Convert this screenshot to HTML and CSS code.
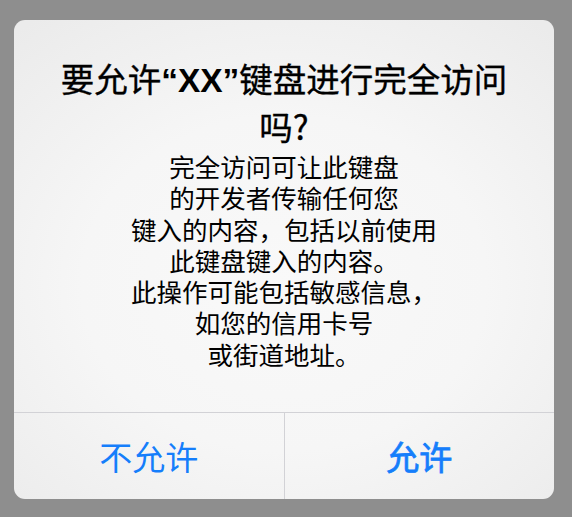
FILE: index.html
```html
<!DOCTYPE html>
<html lang="zh-CN">
<head>
<meta charset="utf-8">
<title>键盘完全访问</title>
<link rel="stylesheet" href="styles.css">
</head>
<body>
<div class="screen">
  <div class="alert">
    <div class="alert-content">
      <h1 class="alert-title">要允许<span class="latin">“XX”</span>键盘进行完全访问<br>吗?</h1>
      <p class="alert-message">完全访问可让此键盘<br>的开发者传输任何您<br>键入的内容，包括以前使用<br>此键盘键入的内容。<br>此操作可能包括敏感信息，<br>如您的信用卡号<br>或街道地址。</p>
    </div>
    <div class="alert-actions">
      <button class="alert-btn">不允许</button>
      <button class="alert-btn alert-btn-primary">允许</button>
    </div>
  </div>
</div>
</body>
</html>
```
FILE: styles.css
```css
* { box-sizing: border-box; }
html, body {
  margin: 0;
  padding: 0;
  background: #8e8e8e;
}
body {
  font-family: "Noto Sans CJK SC", "Noto Sans", sans-serif;
  color: #000;
}
.screen {
  width: 572px;
  height: 517px;
  padding: 20px 18px 18px 14px;
  display: flex;
}
.alert {
  flex: 1;
  display: flex;
  flex-direction: column;
  border-radius: 11px;
  overflow: hidden;
  background: radial-gradient(ellipse 75% 70% at 50% 55%, #f9f9f9 0%, #f6f6f6 50%, #ebebeb 100%);
}
.alert-content {
  height: 392px;
  padding-top: 35px;
  text-align: center;
}
.alert-title {
  margin: 0;
  font-size: 33.5px;
  font-weight: 400;
  line-height: 45px;
  -webkit-text-stroke: 0.35px #000;
}
.alert-title .latin {
  font-family: "Liberation Sans", Arial, sans-serif;
  font-weight: 700;
  -webkit-text-stroke: 0;
}
.alert-message {
  margin: 2px 0 0;
  font-size: 25.5px;
  line-height: 31.3px;
}
.alert-actions {
  flex: 1;
  display: flex;
  border-top: 1px solid #d2d2d6;
}
.alert-btn {
  flex: 1;
  border: 0;
  background: transparent;
  font-family: "Noto Sans CJK SC", "Noto Sans", sans-serif;
  font-size: 33px;
  font-weight: 400;
  color: #157efb;
  padding: 0;
  margin: 0;
}
.alert-btn + .alert-btn {
  border-left: 1px solid #d2d2d6;
}
.alert-btn-primary {
  -webkit-text-stroke: 0.8px #157efb;
}
```
